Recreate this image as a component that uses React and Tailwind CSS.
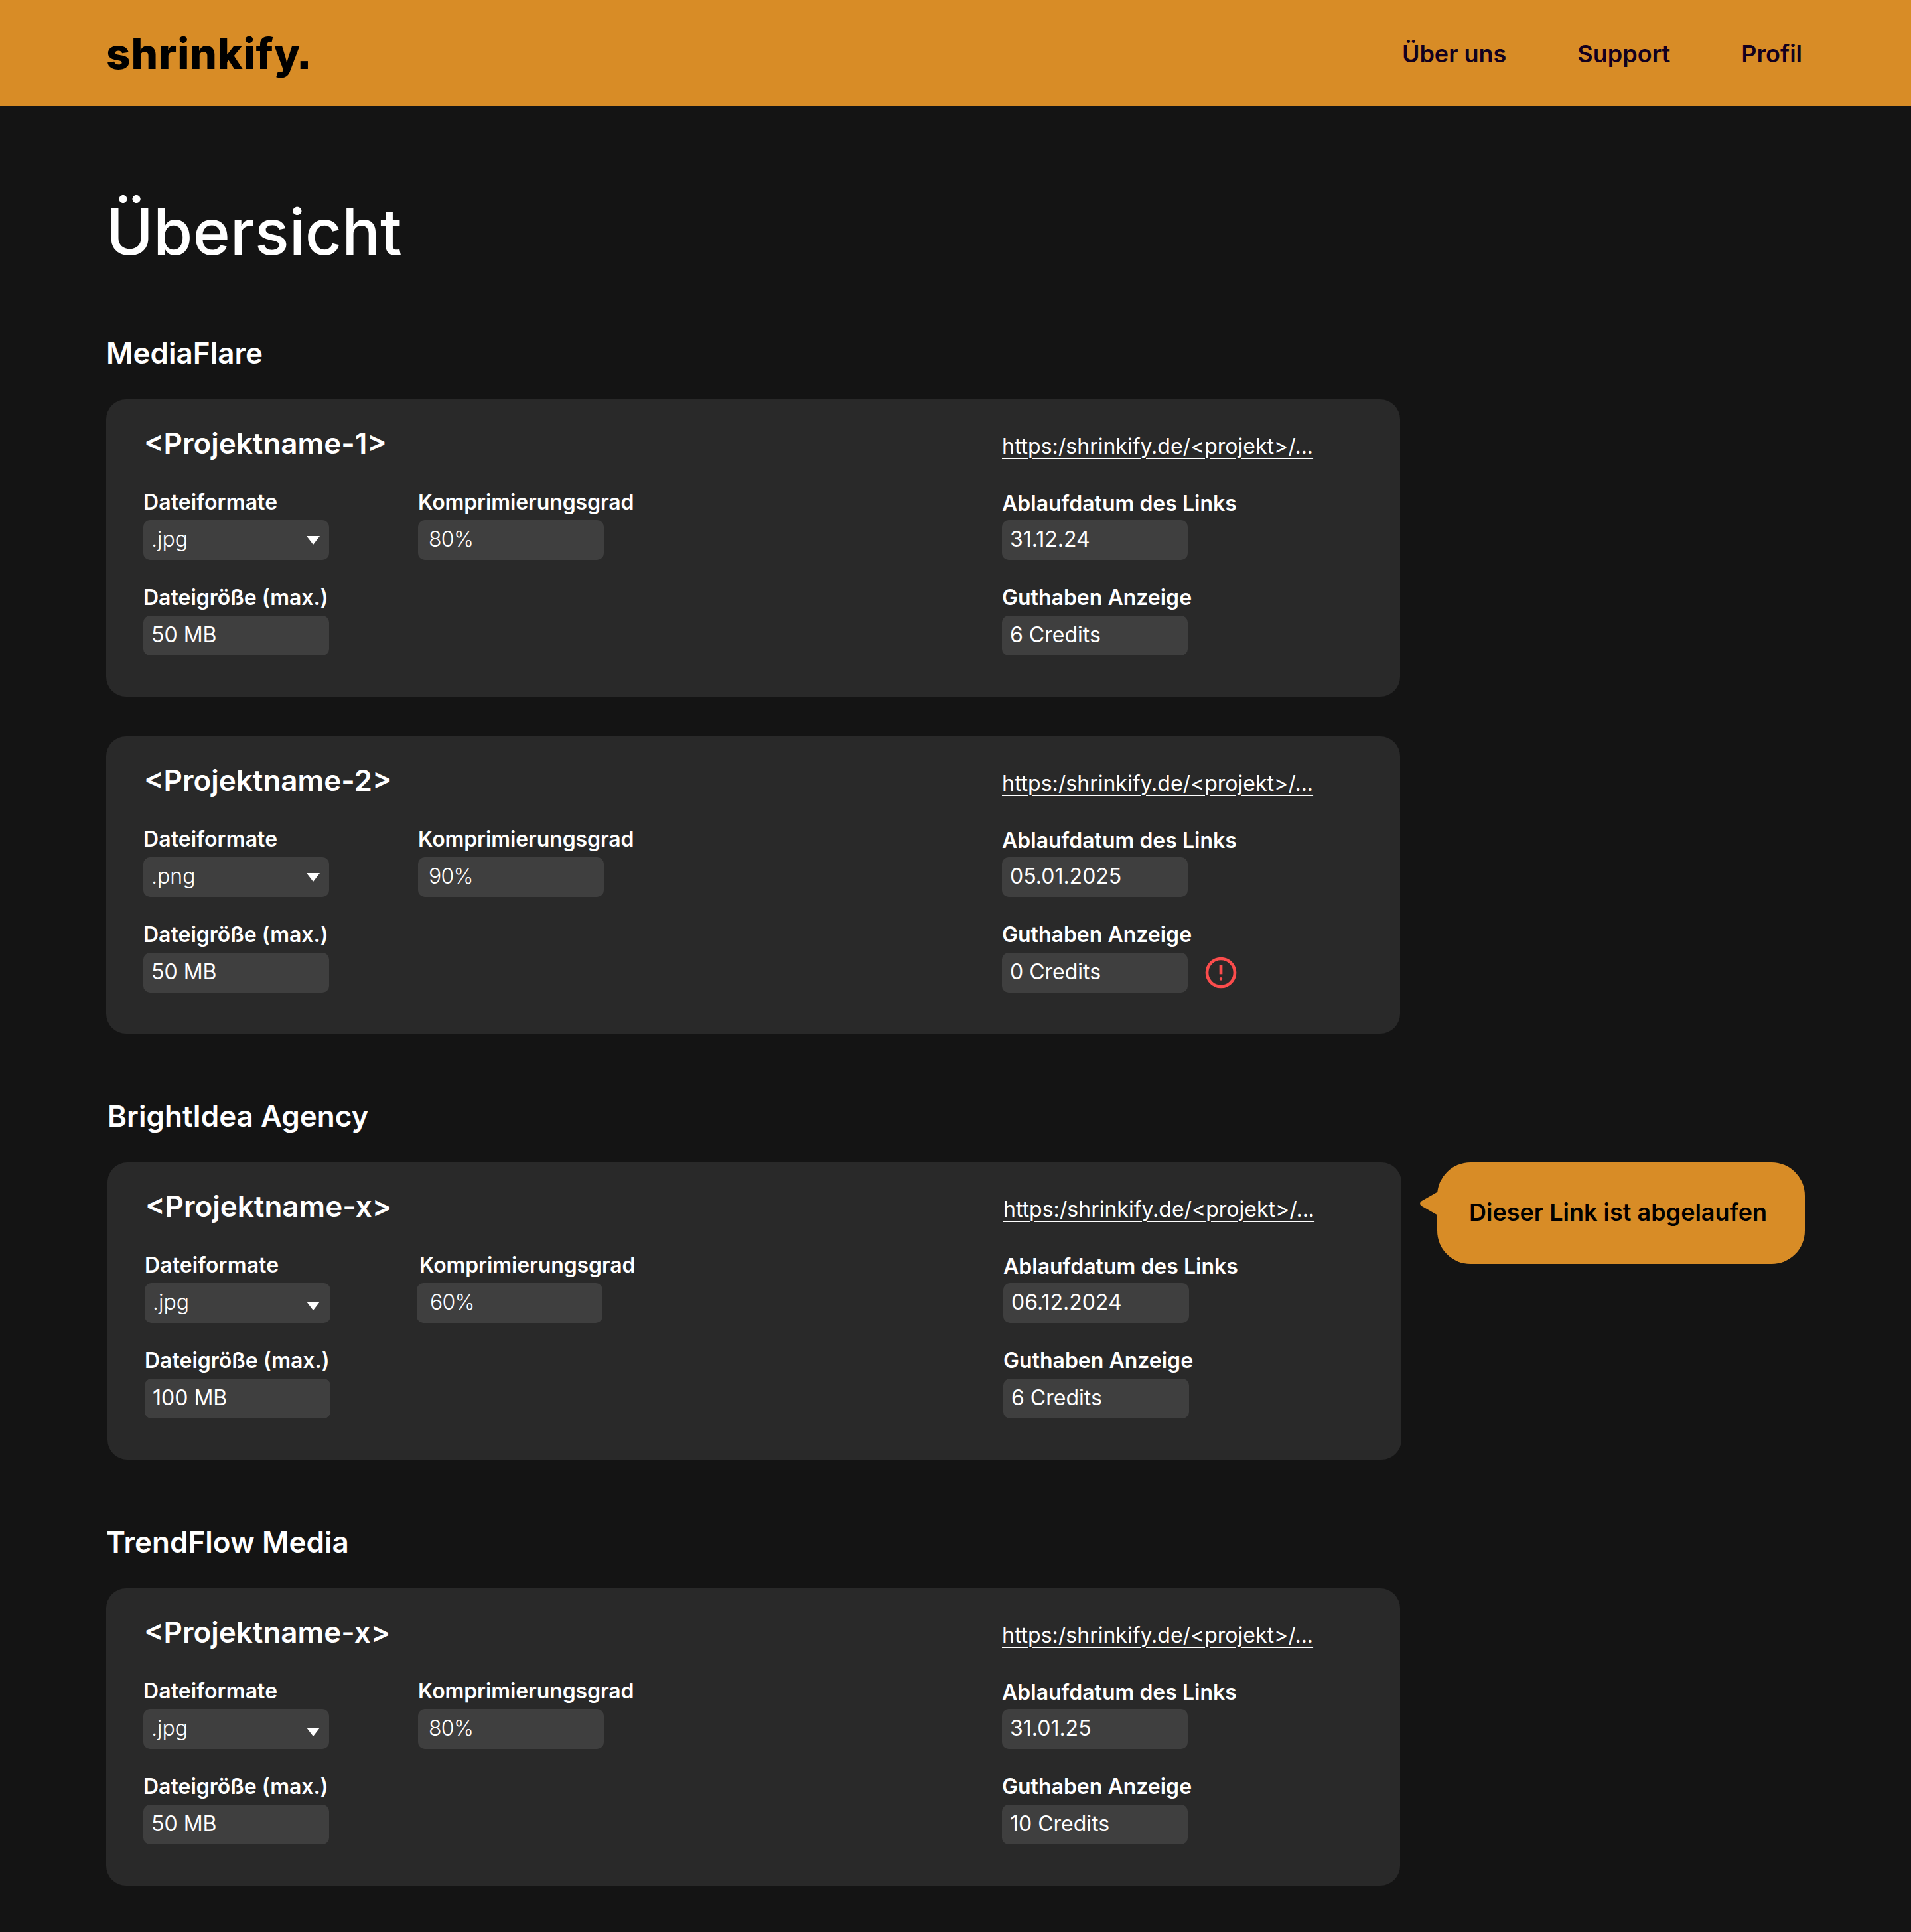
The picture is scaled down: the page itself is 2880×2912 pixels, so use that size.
const LINK_TEXT = "https:/shrinkify.de/<projekt>/...";

function Field({
  label,
  labelClass = "mb-2",
  valueClass = "pl-3",
  boxClass = "",
  weightClass = "font-normal",
  value,
  after,
  children,
}) {
  return (
    <div className="flex flex-col items-start">
      <span className={`h-[39px] whitespace-nowrap text-[32px] leading-[39px] font-semibold ${labelClass}`}>{label}</span>
      <div className={`flex h-[60px] items-center ${boxClass}`}>
        <div className={`flex h-[60px] w-[280px] items-start justify-between rounded-[10px] bg-[#3f3f3f] pt-[9px] ${valueClass}`}>
          <span className={`text-[32px] leading-[39px] ${weightClass}`}>{value}</span>
          {children}
        </div>
        {after}
      </div>
    </div>
  );
}

function Caret({ className }) {
  return (
    <svg className={`h-[13px] w-5 ${className}`} viewBox="0 0 20 13" fill="#ffffff">
      <path d="M0 0H20L10 13Z" />
    </svg>
  );
}

function AlertIcon() {
  return (
    <svg className="ml-[22px] size-14 shrink-0" viewBox="0 0 24 24" fill="none">
      <circle cx="12" cy="12" r="9" stroke="#fb4c4c" strokeWidth="2" />
      <rect x="11" y="7" width="2" height="6" fill="#fb4c4c" />
      <circle cx="12" cy="16" r="1" fill="#fb4c4c" />
    </svg>
  );
}

function ProjectCard({
  name,
  format,
  ratio,
  size,
  expires,
  credits,
  alert,
  caretClass = "mt-[15px] mr-3.5",
  ratioBoxClass = "",
  ratioValueClass = "pl-4",
}) {
  return (
    <article className="flex h-[448px] w-[1950px] shrink-0 rounded-[30px] bg-[#292929] pl-14">
      <div className="flex w-[1294px] flex-col pt-10">
        <h3 className="mb-[42px] pl-px text-[44px] leading-[53px] font-semibold">{name}</h3>
        <div className="mb-[37px] flex gap-[134px]">
          <div className="w-[280px]">
            <Field label="Dateiformate" labelClass="mb-2 tracking-[0.1px]" value={format} weightClass="font-[350]">
              <Caret className={caretClass} />
            </Field>
          </div>
          <Field
            label="Komprimierungsgrad"
            labelClass="mb-2 tracking-[-0.1px]"
            value={ratio}
            weightClass="font-[350] tracking-[-0.7px]"
            boxClass={ratioBoxClass}
            valueClass={ratioValueClass}
          />
        </div>
        <Field label="Dateigröße (max.)" value={size} />
      </div>
      <div className="flex flex-col items-start pt-[51px]">
        <a className="mb-[47px] text-[32px] leading-[39px] whitespace-nowrap underline decoration-2 underline-offset-[6px]">
          {LINK_TEXT}
        </a>
        <div className="mb-[37px]">
          <Field label="Ablaufdatum des Links" labelClass="mb-1.5" value={expires} />
        </div>
        <Field label="Guthaben Anzeige" value={credits} after={alert ? <AlertIcon /> : null} />
      </div>
    </article>
  );
}

function Notice({ children }) {
  return (
    <aside className="relative ml-[54px] h-[153px] w-[554px] rounded-[50px] bg-[#d88c26] pt-[53px] pl-12">
      <svg className="absolute top-[44px] -left-[26px] h-[36px] w-[28px]" viewBox="0 0 28 36" fill="#d88c26">
        <path d="M28 -0.4L2 14.6Q-2 18 2 21.4L28 36.4Z" />
      </svg>
      <p className="text-4xl leading-[44px] font-semibold whitespace-nowrap text-black">{children}</p>
    </aside>
  );
}

function SectionTitle({ children }) {
  return <h2 className="mb-[43px] text-[44px] leading-[53px] font-semibold">{children}</h2>;
}

export default function App() {
  return (
    <div className="min-h-[2912px] w-[2880px] bg-[#141414] font-['Inter',sans-serif] text-white">
      <header className="flex h-40 items-start justify-between bg-[#d88c26] pr-[164px] pl-40">
        <div className="mt-[42px] flex h-[77px] items-start text-black">
          <span className="text-[64px] leading-[77px] font-extrabold tracking-[0.9px]">shrinkify</span>
          <span className="-ml-1.5 font-['Liberation_Sans',sans-serif] text-[80px] leading-[69px] font-bold">.</span>
        </div>
        <nav className="mt-[59px] flex gap-[107px] text-4xl leading-[44px] font-semibold text-[#12001f]">
          <a>Über uns</a>
          <a>Support</a>
          <a>Profil</a>
        </nav>
      </header>

      <main className="flex flex-col pt-[131px] pl-40">
        <h1 className="mb-[99px] text-8xl leading-[116px] font-medium">Übersicht</h1>

        <section className="mb-[98px]">
          <SectionTitle>MediaFlare</SectionTitle>
          <div className="flex flex-col gap-[60px]">
            <ProjectCard name="<Projektname-1>" format=".jpg" ratio="80%" size="50 MB" expires="31.12.24" credits="6 Credits" />
            <ProjectCard name="<Projektname-2>" format=".png" ratio="90%" size="50 MB" expires="05.01.2025" credits="0 Credits" alert />
          </div>
        </section>

        <section className="mb-[98px] pl-0.5">
          <SectionTitle>BrightIdea Agency</SectionTitle>
          <div className="flex items-start">
            <ProjectCard
              name="<Projektname-x>"
              format=".jpg"
              ratio="60%"
              size="100 MB"
              expires="06.12.2024"
              credits="6 Credits"
              caretClass="mt-[19px] mr-4"
              ratioBoxClass="-ml-1"
              ratioValueClass="pl-5"
            />
            <Notice>Dieser Link ist abgelaufen</Notice>
          </div>
        </section>

        <section>
          <SectionTitle>TrendFlow Media</SectionTitle>
          <ProjectCard
            name="<Projektname-x>"
            format=".jpg"
            ratio="80%"
            size="50 MB"
            expires="31.01.25"
            credits="10 Credits"
            caretClass="mt-[19px] mr-3.5"
          />
        </section>
      </main>
    </div>
  );
}
